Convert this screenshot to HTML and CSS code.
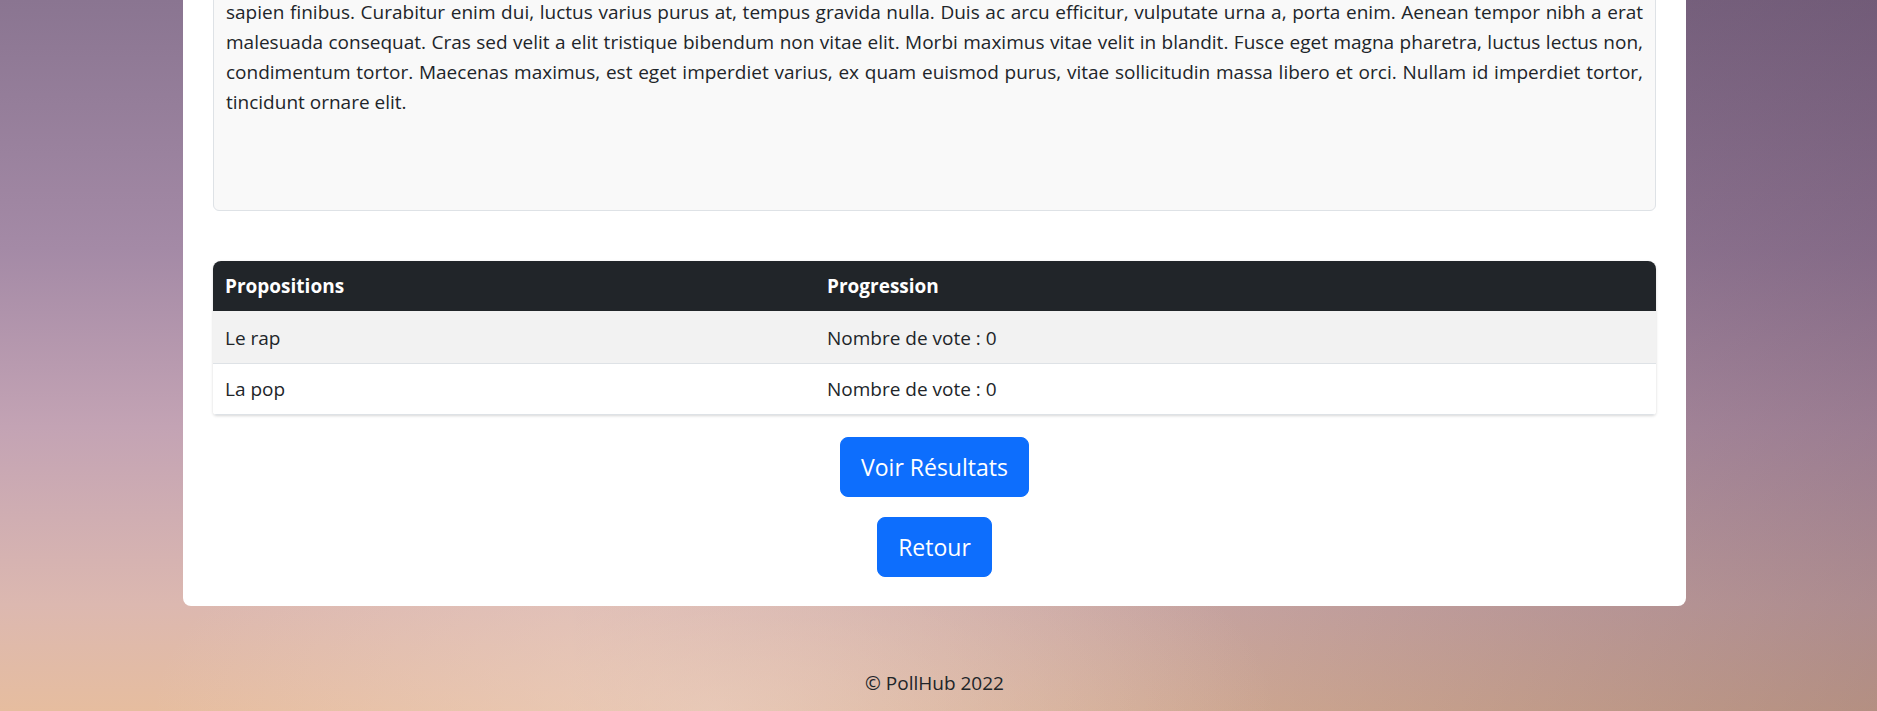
FILE: index.html
```html
<!DOCTYPE html>
<html lang="fr">
<head>
<meta charset="utf-8">
<title>PollHub</title>
<link rel="stylesheet" href="styles.css">
</head>
<body>
<main class="page">
  <section class="card">
    <div class="desc">
      <p>sapien finibus. Curabitur enim dui, luctus varius purus at, tempus gravida nulla. Duis ac arcu efficitur, vulputate urna a, porta enim. Aenean tempor nibh a erat malesuada consequat. Cras sed velit a elit tristique bibendum non vitae elit. Morbi maximus vitae velit in blandit. Fusce eget magna pharetra, luctus lectus non, condimentum tortor. Maecenas maximus, est eget imperdiet varius, ex quam euismod purus, vitae sollicitudin massa libero et orci. Nullam id imperdiet tortor, tincidunt ornare elit.</p>
    </div>

    <div class="tbl-wrap">
      <table class="tbl">
        <thead>
          <tr><th class="col-prop">Propositions</th><th>Progression</th></tr>
        </thead>
        <tbody>
          <tr class="striped"><td>Le rap</td><td>Nombre de vote : 0</td></tr>
          <tr><td>La pop</td><td>Nombre de vote : 0</td></tr>
        </tbody>
      </table>
    </div>

    <div class="actions">
      <a class="btn" href="#">Voir Résultats</a>
      <a class="btn" href="#">Retour</a>
    </div>
  </section>

  <footer class="footer">© PollHub 2022</footer>
</main>
</body>
</html>
```
FILE: styles.css
```css
* { box-sizing: border-box; }

html {
  min-height: 100%;
  background:
    radial-gradient(ellipse 30% 35% at 38% 100%, rgba(238, 214, 205, 0.55), rgba(238, 214, 205, 0)),
    linear-gradient(90deg, rgba(50, 25, 55, 0) 0%, rgba(50, 25, 55, 0) 30%, rgba(50, 25, 55, 0.28) 100%),
    linear-gradient(180deg, #8a7591 0%, #a48aa6 35%, #c3a3b4 60%, #dcb8b0 85%, #e6bd9f 100%);
  background-attachment: fixed;
}

body {
  margin: 0;
  padding-right: 8px;
  font-family: "Open Sans", "Noto Sans", sans-serif;
  font-size: 19px;
  line-height: 30px;
  color: #212529;
}

.page {
  display: flex;
  flex-direction: column;
  align-items: center;
}

.card {
  width: 1503px;
  margin-top: -46px;
  padding: 30px 30px 29px;
  background: #fff;
  border-radius: 8px;
  display: flex;
  flex-direction: column;
}

.desc {
  height: 227px;
  padding: 12px 12px;
  background: #f9f9f9;
  border: 1px solid #dee2e6;
  border-radius: 6px;
  overflow: hidden;
}

.desc p {
  margin: 0;
  text-align: justify;
}

.tbl-wrap {
  margin-top: 50px;
  border-radius: 8px 8px 4px 4px;
  overflow: hidden;
  box-shadow: 0 1px 3px rgba(0, 0, 0, 0.16);
}

.tbl {
  width: 100%;
  border-collapse: collapse;
}

.tbl th,
.tbl td {
  padding: 10px 12px;
  text-align: left;
  vertical-align: top;
}

.tbl th {
  background: #212529;
  color: #fff;
  font-weight: 700;
}

.col-prop { width: 602px; }

.tbl tbody tr:first-child td { padding-top: 12px; }

.tbl td {
  border-bottom: 1px solid #dee2e6;
  background: #fff;
}

.tbl tr.striped td { background: #f2f2f2; }

.actions {
  margin-top: 22px;
  display: flex;
  flex-direction: column;
  align-items: center;
  gap: 20px;
}

.btn {
  display: inline-block;
  padding: 12px 20px;
  font-size: 23px;
  line-height: 34px;
  color: #fff;
  background: #0d6efd;
  border: 1px solid #0d6efd;
  border-radius: 8px;
  text-decoration: none;
}

.footer {
  margin-top: 62px;
  padding-bottom: 20px;
  text-align: center;
}
```
